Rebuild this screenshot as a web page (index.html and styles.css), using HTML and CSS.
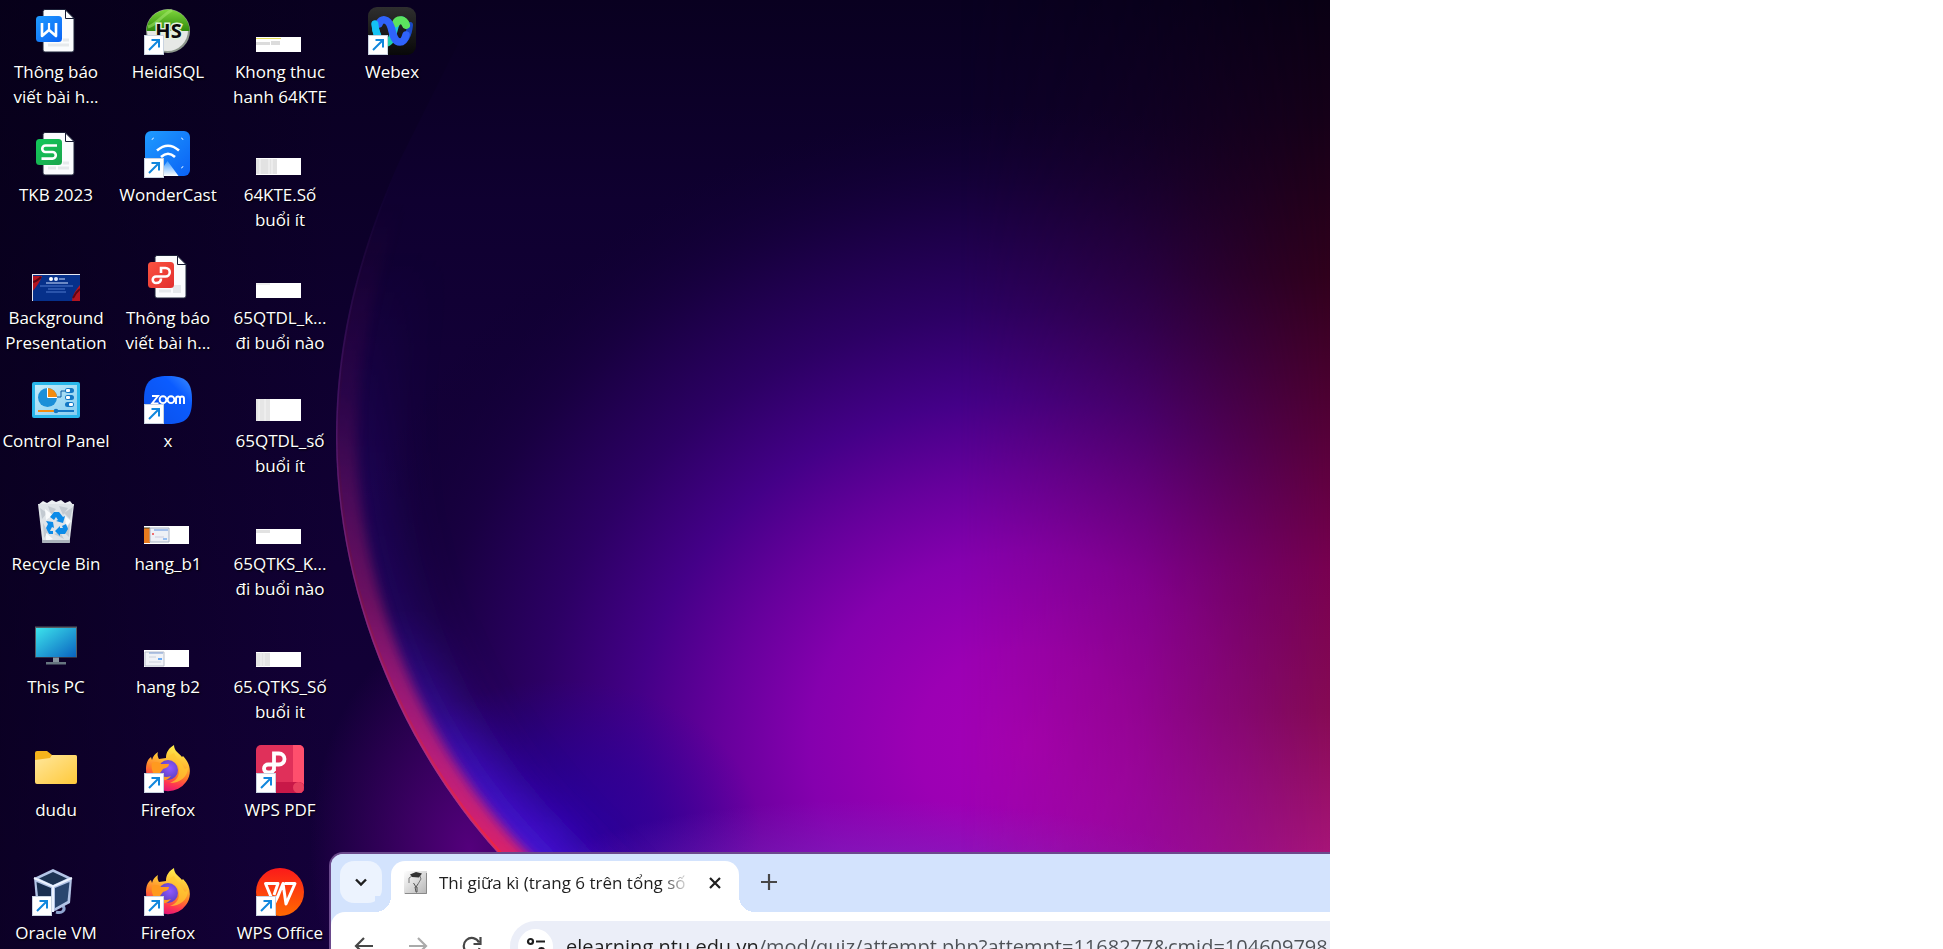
FILE: index.html
```html
<!DOCTYPE html>
<html lang="vi">
<head>
<meta charset="utf-8">
<title>Desktop</title>
<link rel="stylesheet" href="styles.css">
</head>
<body>
<svg class="defs" aria-hidden="true">
  <defs>
    <linearGradient id="gBlue" x1="0" y1="0" x2="1" y2="1"><stop offset="0" stop-color="#1f9bff"/><stop offset="1" stop-color="#0a62f5"/></linearGradient>
    <linearGradient id="gGreen" x1="0" y1="0" x2="1" y2="1"><stop offset="0" stop-color="#12c95a"/><stop offset="1" stop-color="#1ba54d"/></linearGradient>
    <linearGradient id="gRed" x1="0" y1="0" x2="1" y2="1"><stop offset="0" stop-color="#fb5340"/><stop offset="1" stop-color="#e22f2f"/></linearGradient>
    <linearGradient id="gHeidi" x1="0" y1="0" x2="0" y2="1"><stop offset="0" stop-color="#7ed63c"/><stop offset="1" stop-color="#2f8a0c"/></linearGradient>
    <linearGradient id="gScreen" x1="0" y1="0" x2="1" y2="1"><stop offset="0" stop-color="#3ce3ec"/><stop offset="1" stop-color="#0a63c0"/></linearGradient>
    <linearGradient id="gFolder" x1="0" y1="0" x2="1" y2="1"><stop offset="0" stop-color="#ffe79d"/><stop offset="1" stop-color="#ffc93a"/></linearGradient>
    <linearGradient id="gFox" x1=".7" y1="0" x2=".4" y2="1"><stop offset="0" stop-color="#fff44f"/><stop offset=".35" stop-color="#ffbd35"/><stop offset=".6" stop-color="#ff7a2a"/><stop offset=".8" stop-color="#ff3750"/><stop offset="1" stop-color="#e0107c"/></linearGradient>
    <radialGradient id="gGlobe" cx=".6" cy=".4" r=".6"><stop offset="0" stop-color="#9059ff"/><stop offset="1" stop-color="#5b3fc0"/></radialGradient>
    <linearGradient id="gZoom" x1="0" y1="1" x2="1" y2="0"><stop offset="0" stop-color="#0b4fe8"/><stop offset=".7" stop-color="#0b5cff"/><stop offset="1" stop-color="#3d8dff"/></linearGradient>
    <linearGradient id="gWps" x1="0" y1="0" x2="0" y2="1"><stop offset="0" stop-color="#fb1a1a"/><stop offset="1" stop-color="#ff6a00"/></linearGradient>
    <linearGradient id="gPanel" x1="0" y1="0" x2="1" y2="1"><stop offset="0" stop-color="#c4ecfa"/><stop offset="1" stop-color="#86cdf0"/></linearGradient>
    <linearGradient id="gBeam" x1="0" y1="0" x2="0" y2="1"><stop offset="0" stop-color="#3e9cff"/><stop offset="1" stop-color="#fff"/></linearGradient>
    <linearGradient id="gDark" x1="0" y1="0" x2="0" y2="1"><stop offset="0" stop-color="#2f2f2f"/><stop offset="1" stop-color="#080808"/></linearGradient>
    <linearGradient id="gWebexA" x1="0" y1="0" x2="0" y2="1"><stop offset="0" stop-color="#12c4ff"/><stop offset="1" stop-color="#1fd0a8"/></linearGradient>

    <symbol id="shortcut" viewBox="0 0 20 20">
      <rect width="20" height="20" fill="#c9d3e0"/><rect x="1" y="1" width="18" height="18" fill="#fff"/>
      <path d="M5 15 14.500 5.500M7.500 5H15v7.500" fill="none" stroke="#1187dd" stroke-width="2"/>
    </symbol>
    <symbol id="page" viewBox="0 0 48 48">
      <path d="M13 2.500h20l9 9V43a2 2 0 0 1-2 2H13a2 2 0 0 1-2-2v-38.500a2 2 0 0 1 2-2z" fill="#fbfcfe" stroke="#1d2238"/>
      <path d="M33.500 3v8.500H42z" fill="#fff" stroke="#151a33"/>
    </symbol>
    <symbol id="docw" viewBox="0 0 48 48"><use href="#page"/>
      <path d="M16 38h21M31 33h6" stroke="#e6e9ec" stroke-width="3"/>
      <rect x="4" y="9" width="26" height="26" rx="3.500" fill="url(#gBlue)"/>
      <path d="M10 15v13l7-6 7 6V15" transform="translate(0 1)" fill="none" stroke="#fff" stroke-width="2.600" stroke-linejoin="round"/><path d="M17 16v7" stroke="#fff" stroke-width="2.200"/>
    </symbol>
    <symbol id="docs" viewBox="0 0 48 48"><use href="#page"/>
      <path d="M16 38h8m2 0h11M31 33h6" stroke="#e6e9ec" stroke-width="3"/>
      <rect x="4" y="9" width="26" height="26" rx="3.500" fill="url(#gGreen)"/>
      <path d="M25 15.500H13.500a3.200 3.200 0 0 0 0 6.500h7a3.300 3.300 0 0 1 0 6.600H9.500" fill="none" stroke="#fff" stroke-width="2.600"/>
    </symbol>
    <symbol id="docp" viewBox="0 0 48 48"><use href="#page"/>
      <path d="M15 38h12" stroke="#e6e9ec" stroke-width="3"/><path d="M29 32h8v8h-8z" fill="#e6e9ec"/>
      <rect x="4" y="9" width="26" height="26" rx="3.500" fill="url(#gRed)"/>
      <path d="M17 20v-5h4.500a4 4 0 0 1 0 8.500H12a3.200 3.200 0 1 0 0 6.500c3 0 5-1.500 5-4.500" fill="none" stroke="#fff" stroke-width="2.600"/>
    </symbol>
    <symbol id="heidi" viewBox="0 0 48 48">
      <circle cx="24" cy="24" r="22" fill="#8d978c"/><circle cx="23.500" cy="23.500" r="20.500" fill="#e6e8e6"/>
      <path d="M2.500 24a21.500 21.500 0 0 1 43 0z" fill="url(#gHeidi)"/>
      <path d="M4 20c8-2 12-10 24-17" fill="none" stroke="#a8ea70" stroke-opacity=".5" stroke-width="3"/>
      <text x="24.500" y="31" text-anchor="middle" class="heidi-text">HS</text>
    </symbol>
    <symbol id="wonder" viewBox="0 0 48 48">
      <rect x="1" y="1" width="45" height="45" rx="6" fill="url(#gBlue)"/>
      <path d="M13 46 23.500 31 34.500 46z" fill="url(#gBeam)"/>
      <path d="M13 20.500q11-9.500 22 0M17 27q7-6.500 14 0" fill="none" stroke="#fff" stroke-width="2.600"/>
      <path d="M8 10q0-2 2-2M37 8q2 0 2 2M39 36q0 2-2 2" fill="none" stroke="#c5e3ff"/>
    </symbol>
    <symbol id="webex" viewBox="0 0 48 48">
      <rect width="48" height="48" rx="9" fill="url(#gDark)"/>
      <path d="M42 18C41 29 37 35 32 35" fill="none" stroke="#1a48c4" stroke-width="6" stroke-linecap="round"/>
      <path d="M7 17c1 12 5 19 11 19 6 0 7-9 9-16 1-4 3-7 7-7" fill="none" stroke="url(#gWebexA)" stroke-width="7" stroke-linecap="round"/>
      <path d="M28 16c2-4 8-4 10 2" fill="none" stroke="#5be35f" stroke-width="8" stroke-linecap="round"/>
      <path d="M11 17c2-6 9-6 12 3 2 7 3 15 9 15 3 0 5-3 6-7" fill="none" stroke="#2f63fb" stroke-width="7.500" stroke-linecap="round"/>
      <path d="M7 17c0 4 1 8 3 12" fill="none" stroke="#14c2f4" stroke-width="7" stroke-linecap="round"/>
    </symbol>
    <symbol id="control" viewBox="0 0 48 48">
      <rect y="6" width="48" height="36" rx="2" fill="#29b6ea"/><rect x="3" y="9" width="42" height="30" fill="url(#gPanel)"/>
      <circle cx="15.500" cy="21.500" r="9.500" fill="#1b8fd8"/><path d="M15.500 21.500V12a9.500 9.500 0 0 1 9.500 9.500z" fill="#f28c0f"/><path d="M15.500 12v9.500H25" fill="none" stroke="#fff"/>
      <path d="M25 21h4v-6h5" fill="none" stroke="#0c5ba0"/>
      <g fill="#1277c4"><rect x="33" y="12" width="9" height="5" rx="2.500"/><rect x="33" y="19" width="9" height="5" rx="2.500"/><rect x="33" y="26" width="9" height="5" rx="2.500"/></g>
      <g fill="#fff"><rect x="34" y="13" width="4" height="3" rx="1"/><rect x="34" y="20" width="4" height="3" rx="1"/><rect x="37" y="27" width="4" height="3" rx="1"/></g>
      <path d="M6 35h17" stroke="#f28c0f" stroke-width="2"/><path d="M24 35h18" stroke="#1277c4" stroke-width="2"/><circle cx="24" cy="35" r="2.300" fill="#1277c4"/>
    </symbol>
    <symbol id="zoomapp" viewBox="0 0 48 48">
      <path d="M24 0c18 0 24 6 24 24s-6 24-24 24S0 42 0 24 6 0 24 0z" fill="url(#gZoom)"/>
      <g fill="none" stroke="#fff" stroke-width="1.900"><path d="M8 20h6l-6 7.500h6.500"/><circle cx="19" cy="23.700" r="3.400"/><circle cx="27" cy="23.700" r="3.400"/><path d="M32 28v-5.500a2 2 0 0 1 4 0V28m0-5.500a2 2 0 0 1 4 0V28"/></g>
    </symbol>
    <symbol id="bin" viewBox="0 0 48 48">
      <path d="M6 6l5-4 4 2 5-3 4 2 5-2 4 3 5-2 4 5z" fill="#eceff2"/>
      <path d="M6 5h36l-4.500 39h-27z" fill="#dfe4e8"/>
      <path d="M8 9l7 5-5 6zM16 7l8 3-5 6zM27 7l9 2-5 7zM41 8l-3 12-6-6zM11 24l5 9-4 6zM22 35l6-2 4 7zM38 24l-1 14-5-5z" fill="#c3cad1"/>
      <path d="M13 10l8 6-7 5zM33 17l6 5-5 6zM14 34l7 6-7 2z" fill="#f8fafb"/>
      <path d="M10 41h28l-.5 3h-27z" fill="#aab2ba"/>
      <g fill="#0c8be8"><path d="M18 18l4-5h5l4 5 2-1-2 7-7-2 2-1-2-3-2 3z"/><path d="M14 22l7 1 1 6-2-1-2 4h3v3h-4l-3-6 2-4z"/><path d="M34 25l2 5-3 5h-5v2l-5-5 5-5v2h3l-1-2z"/></g>
    </symbol>
    <symbol id="pc" viewBox="0 0 48 48">
      <rect x="3" y="4.500" width="42" height="31" fill="#555c63"/><rect x="4" y="6" width="40" height="29" fill="url(#gScreen)"/>
      <path d="M21 35.500h6V40h-6z" fill="#87949e"/><path d="M14 40h20v2.500H14z" fill="#66757f"/>
    </symbol>
    <symbol id="folder" viewBox="0 0 48 48">
      <path d="M3 8a2 2 0 0 1 2-2h10l5 4h23a2 2 0 0 1 2 2v5H3z" fill="#f5b31c"/><path d="M3 15l15-2 2-3h23a2 2 0 0 1 2 2v25a2 2 0 0 1-2 2H5a2 2 0 0 1-2-2z" fill="url(#gFolder)"/>
    </symbol>
    <symbol id="fox" viewBox="0 0 48 48">
      <path d="M2 24c0-6 2-10 5-12l1 3c1-4 3-6 6-8-1 3 0 5 1 7l7-1c0-6 3-10 8-13 0 6 5 8 8 12l1-1c8 8 9 18 3 26a22 22 0 0 1-36 0C3 33 2 29 2 24z" fill="url(#gFox)"/>
      <circle cx="24" cy="25" r="10" fill="url(#gGlobe)"/>
      <path d="M8 18c4-2 7-1 9 1h8c0 3-3 4-6 5l-3 4c2 4 6 5 11 3-4 6-12 5-16 0-3-4-4-9-3-13z" fill="#ff9a1f"/>
      <path d="M25 12c6 1 9 6 10 12 1 7-3 12-9 14 10 0 18-6 18-16-2 2-3 2-4 1-2-6-8-9-10-15-2 1-4 2-5 4z" fill="#ffc830" fill-opacity=".75"/>
    </symbol>
    <symbol id="wpspdf" viewBox="0 0 48 48">
      <rect width="48" height="48" rx="5" fill="#e0305a"/><path d="M37 0h6a5 5 0 0 1 5 5v38a5 5 0 0 1-11 0z" fill="#ff4f6d"/>
      <path d="M18 37h25a5.500 5.500 0 0 1 0 11H18z" fill="#c81848"/><circle cx="42.500" cy="42.500" r="5.500" fill="#e8405f"/>
      <path d="M18 26V8.500h5a5.500 5.500 0 0 1 0 11H12a4 4 0 1 0 0 8c4 0 6-1 6-5" fill="none" stroke="#fff" stroke-width="3.800"/>
    </symbol>
    <symbol id="wps" viewBox="0 0 48 48">
      <circle cx="24" cy="24" r="24" fill="url(#gWps)"/>
      <path d="M18 27 22 15.500H9.500L18 36l4-8 5-12.500L30 36l9-20.500H28.500" fill="none" stroke="#fff" stroke-width="3" stroke-linejoin="round"/>
    </symbol>
    <symbol id="vbox" viewBox="0 0 48 48">
      <path d="M24 44c6 2 10-2 7-6" fill="none" stroke="#8fa5cf" stroke-width="3"/>
      <path d="M2 10 21 1l19 9-2 25-17 9L4 33z" fill="#b3c4e6"/>
      <path d="M7 10.500 21 4l14 6.500L21 17z" fill="#1e3453"/><path d="M4.500 14 19 20v20L6.500 33z" fill="#1a2f4f"/><path d="M37.500 14 23 20v20l12.500-7z" fill="#2a466f"/>
      <path d="M2 10l19 8.500L40 10M21 18v26" fill="none" stroke="#edf3ff" stroke-width="2"/>
    </symbol>
  </defs>
</svg>

<main class="desktop">
  <svg class="wallpaper" viewBox="0 0 1330 949" preserveAspectRatio="xMidYMid slice" aria-hidden="true">
    <defs>
      <linearGradient id="sky" x1="0" y1="0" x2="0" y2="1"><stop offset="0" stop-color="#090020"/><stop offset=".4" stop-color="#0f0030"/><stop offset="1" stop-color="#15003c"/></linearGradient>
      <linearGradient id="leftDark" x1="0" x2="1" y1="0" y2="0"><stop offset="0" stop-color="#050014" stop-opacity=".55"/><stop offset="1" stop-color="#050014" stop-opacity="0"/></linearGradient>
      <radialGradient id="glow" gradientUnits="userSpaceOnUse" cx="0" cy="0" r="1" gradientTransform="translate(1025 745) scale(720 640)">
        <stop offset="0" stop-color="#a600b6"/><stop offset=".15" stop-color="#9c00b4"/><stop offset=".3" stop-color="#8500ae"/><stop offset=".42" stop-color="#66009c"/><stop offset=".54" stop-color="#440088"/><stop offset=".68" stop-color="#2c0064"/><stop offset=".84" stop-color="#190042"/><stop offset="1" stop-color="#0f0030" stop-opacity="0"/>
      </radialGradient>
      <radialGradient id="blue" gradientUnits="userSpaceOnUse" cx="0" cy="0" r="1" gradientTransform="translate(560 830) scale(200 150)"><stop offset="0" stop-color="#2a00a4" stop-opacity=".9"/><stop offset=".5" stop-color="#2600a0" stop-opacity=".5"/><stop offset="1" stop-color="#2600a0" stop-opacity="0"/></radialGradient>
      <radialGradient id="haze" gradientUnits="userSpaceOnUse" cx="0" cy="0" r="1" gradientTransform="translate(880 890) scale(360 90)"><stop offset="0" stop-color="#8428c4" stop-opacity=".8"/><stop offset="1" stop-color="#8428c4" stop-opacity="0"/></radialGradient>
      <radialGradient id="outer" gradientUnits="userSpaceOnUse" cx="0" cy="0" r="1" gradientTransform="translate(470 850) scale(160 230)"><stop offset="0" stop-color="#54007c"/><stop offset="1" stop-color="#54007c" stop-opacity="0"/></radialGradient>
      <linearGradient id="redV" gradientUnits="userSpaceOnUse" x1="0" y1="0" x2="0" y2="949"><stop offset="0" stop-color="#090014"/><stop offset=".12" stop-color="#150018"/><stop offset=".29" stop-color="#30001c"/><stop offset=".46" stop-color="#560038"/><stop offset=".6" stop-color="#780050"/><stop offset=".75" stop-color="#860a54"/><stop offset=".9" stop-color="#a81478"/></linearGradient>
      <linearGradient id="redH" gradientUnits="userSpaceOnUse" x1="960" y1="0" x2="1330" y2="0"><stop offset="0" stop-color="#fff" stop-opacity="0"/><stop offset=".5" stop-color="#fff" stop-opacity=".36"/><stop offset="1" stop-color="#fff"/></linearGradient>
      <linearGradient id="fade" gradientUnits="userSpaceOnUse" x1="0" y1="200" x2="0" y2="850"><stop offset="0" stop-color="#fff" stop-opacity="0"/><stop offset=".3" stop-color="#fff" stop-opacity=".1"/><stop offset=".6" stop-color="#fff" stop-opacity=".4"/><stop offset="1" stop-color="#fff"/></linearGradient>
      <linearGradient id="fadeBlue" gradientUnits="userSpaceOnUse" x1="0" y1="250" x2="0" y2="850"><stop offset="0" stop-color="#fff" stop-opacity="0"/><stop offset=".6" stop-color="#fff" stop-opacity=".22"/><stop offset="1" stop-color="#fff" stop-opacity=".95"/></linearGradient>
      <linearGradient id="rim" gradientUnits="userSpaceOnUse" x1="0" y1="180" x2="0" y2="560"><stop offset="0" stop-color="#6a3cb0" stop-opacity="0"/><stop offset="1" stop-color="#8a3cb0" stop-opacity=".4"/></linearGradient>
      <mask id="redMask"><rect width="1330" height="949" fill="url(#redH)"/></mask>
      <mask id="fadeMask" maskUnits="userSpaceOnUse" x="0" y="0" width="1330" height="949"><rect width="1330" height="949" fill="url(#fade)"/></mask>
      <mask id="blueMask" maskUnits="userSpaceOnUse" x="0" y="0" width="1330" height="949"><rect width="1330" height="949" fill="url(#fadeBlue)"/></mask>
      <clipPath id="disc"><path d="M400 160C350 270 336 360 336 436 336 590 400 745 497 852L590 949H1330V0H480z"/></clipPath>
      <filter id="soft" filterUnits="userSpaceOnUse" x="100" y="0" width="900" height="1100"><feGaussianBlur stdDeviation="24"/></filter>
      <filter id="edge" filterUnits="userSpaceOnUse" x="100" y="0" width="900" height="1100"><feGaussianBlur stdDeviation="6"/></filter>
    </defs>
    <rect width="1330" height="949" fill="url(#sky)"/>
    <rect width="340" height="949" fill="url(#leftDark)"/>
    <rect width="1330" height="949" fill="url(#outer)"/>
    <g clip-path="url(#disc)">
      <rect y="500" width="1330" height="449" fill="#15003c"/>
      <rect width="1330" height="501" fill="url(#sky)"/>
      <rect width="1330" height="949" fill="url(#glow)"/>
      <rect width="1330" height="949" fill="url(#blue)"/>
      <rect width="1330" height="949" fill="url(#haze)"/>
      <g fill="none" mask="url(#blueMask)">
        <path d="M400 160C350 270 336 360 336 436 336 590 400 745 497 852L590 949" stroke="#4a12dc" stroke-width="110" filter="url(#soft)"/>
      </g>
      <g fill="none" mask="url(#fadeMask)">
        <path d="M400 160C350 270 336 360 336 436 336 590 400 745 497 852L590 949" stroke="#d8206a" stroke-width="42" filter="url(#edge)"/>
        <path d="M400 160C350 270 336 360 336 436 336 590 400 745 497 852L590 949" stroke="#f02444" stroke-width="7"/>
      </g>
      <path d="M400 160C350 270 336 360 336 436 336 590 400 745 497 852" fill="none" stroke="url(#rim)" stroke-width="3"/>
    </g>
    <rect width="1330" height="949" fill="url(#redV)" mask="url(#redMask)"/>
  </svg>

  <div class="icons">
    <button class="item"><svg class="icon"><use href="#docw"/></svg><span class="label">Thông báo<br>viết bài h...</span></button>
    <button class="item"><svg class="icon"><use href="#docs"/></svg><span class="label">TKB 2023</span></button>
    <button class="item"><span class="icon"><span class="photo"><svg viewBox="0 0 48 27"><rect width="48" height="27" fill="#06308a"/><path d="M0 2h10C8 8 5 12 0 18zM48 11c-3 4-7 8-8 16h8z" fill="#b31420"/><path d="M0 8c4 0 6-2 9-5M41 24c2-4 3-6 7-9" stroke="#5c0614" fill="none" stroke-width="2"/><circle cx="19" cy="5" r="2" fill="#fff"/><circle cx="24" cy="5" r="2" fill="#dce8ff"/><path d="M27 5h6M14 9h22" stroke="#cfe0ff"/><path d="M8 12h33M16 15h17M14 18h20" stroke="#4f78cc"/><path d="M0 .5h48M.5 0v27" stroke="#e8e8f0"/></svg></span></span><span class="label">Background<br>Presentation</span></button>
    <button class="item"><svg class="icon"><use href="#control"/></svg><span class="label">Control Panel</span></button>
    <button class="item"><svg class="icon"><use href="#bin"/></svg><span class="label">Recycle Bin</span></button>
    <button class="item"><svg class="icon"><use href="#pc"/></svg><span class="label">This PC</span></button>
    <button class="item"><svg class="icon"><use href="#folder"/></svg><span class="label">dudu</span></button>
    <button class="item"><span class="icon"><svg class="icon"><use href="#vbox"/></svg><svg class="link"><use href="#shortcut"/></svg></span><span class="label">Oracle VM</span></button>

    <button class="item"><span class="icon"><svg class="icon"><use href="#heidi"/></svg><svg class="link"><use href="#shortcut"/></svg></span><span class="label">HeidiSQL</span></button>
    <button class="item"><span class="icon"><svg class="icon"><use href="#wonder"/></svg><svg class="link"><use href="#shortcut"/></svg></span><span class="label">WonderCast</span></button>
    <button class="item"><svg class="icon"><use href="#docp"/></svg><span class="label">Thông báo<br>viết bài h...</span></button>
    <button class="item"><span class="icon"><svg class="icon"><use href="#zoomapp"/></svg><svg class="link"><use href="#shortcut"/></svg></span><span class="label">x</span></button>
    <button class="item"><span class="icon"><span class="thumb h18"><svg viewBox="0 0 45 18"><path d="M0 2h6v15H0z" fill="#e87a1e"/><path d="M0 2h6" stroke="#442"/><path d="M6 2h19v14H6z" fill="#eef1f6" stroke="#a9b3c4"/><path d="M10 4h14" stroke="#5d8fe0"/><path d="M11 11h9" stroke="#ccd"/><path d="M19 13h4" stroke="#3f8df0"/><circle cx="9" cy="8" r="1" fill="#e44"/></svg></span></span><span class="label">hang_b1</span></button>
    <button class="item"><span class="icon"><span class="thumb h17"><svg viewBox="0 0 45 17"><path d="M1 2h19v14H1z" fill="#f1f3f7" stroke="#b9bfca"/><path d="M5 3h14" stroke="#7b9bd4"/><path d="M5 7h7M5 12h12" stroke="#cdd2dc"/><path d="M14 9h4" stroke="#69a9f4" stroke-width="2"/></svg></span></span><span class="label">hang b2</span></button>
    <button class="item"><span class="icon"><svg class="icon"><use href="#fox"/></svg><svg class="link"><use href="#shortcut"/></svg></span><span class="label">Firefox</span></button>
    <button class="item"><span class="icon"><svg class="icon"><use href="#fox"/></svg><svg class="link"><use href="#shortcut"/></svg></span><span class="label">Firefox</span></button>

    <button class="item"><span class="icon"><span class="thumb h15"><svg viewBox="0 0 45 15"><path d="M0 1.500h25" stroke="#e6df5a"/><path d="M0 5h14v3H0zM15 4h9v4h-9z" fill="#dcdcdc"/></svg></span></span><span class="label">Khong thuc<br>hanh 64KTE</span></button>
    <button class="item"><span class="icon"><span class="thumb h17"><svg viewBox="0 0 45 17"><path d="M0 1h21v15H0z" fill="#e2e2e2"/><path d="M4 1v15M13 1v15M16 1v15" stroke="#f6f6f6"/></svg></span></span><span class="label">64KTE.Số<br>buổi ít</span></button>
    <button class="item"><span class="icon"><span class="thumb h15"><svg viewBox="0 0 45 15"><path d="M0 1h14" stroke="#ddd"/></svg></span></span><span class="label">65QTDL_k...<br>đi buổi nào</span></button>
    <button class="item"><span class="icon"><span class="thumb h22"><svg viewBox="0 0 45 22"><path d="M0 0h14v22H0z" fill="#e6e6e6"/><path d="M3 0v22M9 0v22" stroke="#f5f5f5"/></svg></span></span><span class="label">65QTDL_số<br>buổi ít</span></button>
    <button class="item"><span class="icon"><span class="thumb h15"><svg viewBox="0 0 45 15"><path d="M0 1h14v3H0z" fill="#e2e2e2"/></svg></span></span><span class="label">65QTKS_K...<br>đi buổi nào</span></button>
    <button class="item"><span class="icon"><span class="thumb h15"><svg viewBox="0 0 45 15"><path d="M0 1h14v13H0z" fill="#e4e4e4"/><path d="M5 0v15M8 0v15" stroke="#f4f4f4"/></svg></span></span><span class="label">65.QTKS_Số<br>buổi it</span></button>
    <button class="item"><span class="icon"><svg class="icon"><use href="#wpspdf"/></svg><svg class="link"><use href="#shortcut"/></svg></span><span class="label">WPS PDF</span></button>
    <button class="item"><span class="icon"><svg class="icon"><use href="#wps"/></svg><svg class="link"><use href="#shortcut"/></svg></span><span class="label">WPS Office</span></button>

    <button class="item"><span class="icon"><svg class="icon"><use href="#webex"/></svg><svg class="link"><use href="#shortcut"/></svg></span><span class="label">Webex</span></button>
  </div>

  <section class="browser" aria-label="Browser">
    <div class="tabs">
      <button class="tab-search" aria-label="Search tabs"><svg viewBox="0 0 14 14"><path d="M2 4.500 7 9.500l5-5" fill="none" stroke="#1f1f1f" stroke-width="2.400"/></svg></button>
      <div class="tab">
        <svg class="favicon" viewBox="0 0 23 23"><defs><linearGradient id="fav" x1="0" y1="0" x2="1" y2="1"><stop offset="0" stop-color="#fff"/><stop offset="1" stop-color="#b5b5b5"/></linearGradient></defs><rect width="23" height="23" fill="url(#fav)"/><path d="M22.500 2v20.500H1" fill="none" stroke="#8a8a8a"/><path d="M6 3.500 12 1l6 1.500-3 4-7-.5z" fill="#333"/><path d="M8 5 5 7v5M16 5l1 3-3 5" fill="none" stroke="#777"/><path d="M9.500 12l2.500 4 2-3M11 16h2v5h-1z" fill="none" stroke="#555"/></svg>
        <span class="title">Thi giữa kì (trang 6 trên tổng số</span>
        <button class="close" aria-label="Close tab"><svg viewBox="0 0 14 14"><path d="M2 2l10 10M12 2 2 12" stroke="#1f1f1f" stroke-width="2.200"/></svg></button>
      </div>
      <button class="new-tab" aria-label="New tab"><svg viewBox="0 0 16 16"><path d="M8 0v16M0 8h16" stroke="#474747" stroke-width="2.200"/></svg></button>
    </div>
    <div class="toolbar">
      <button class="nav" aria-label="Back"><svg viewBox="0 0 20 20"><path d="M19 10H2M10 2l-8 8 8 8" fill="none" stroke="#474747" stroke-width="2.200"/></svg></button>
      <button class="nav" aria-label="Forward" disabled><svg viewBox="0 0 20 20"><path d="M1 10h17M10 2l8 8-8 8" fill="none" stroke="#aaa" stroke-width="2.200"/></svg></button>
      <button class="nav" aria-label="Reload"><svg viewBox="0 0 20 20"><path d="M17.500 12A8 8 0 1 1 17 6.500M18.500 1v7h-7" fill="none" stroke="#474747" stroke-width="2.200"/></svg></button>
      <div class="omnibox">
        <button class="site" aria-label="Site information"><svg viewBox="0 0 20 20"><g fill="none" stroke="#1f1f1f" stroke-width="2.200"><circle cx="4.500" cy="5.500" r="2.500"/><path d="M10 5.500h9M1 14.500h9"/><circle cx="15.500" cy="14.500" r="2.500"/></g></svg></button>
        <input class="url" type="text" aria-label="Address" value="elearning.ntu.edu.vn/mod/quiz/attempt.php?attempt=1168277&amp;cmid=104609798">
      </div>
    </div>
  </section>
</main>
</body>
</html>
```
FILE: styles.css
```css
* { box-sizing: border-box; }

body {
  margin: 0;
  background: #fff;
  font-family: "Open Sans", "Noto Sans", sans-serif;
  overflow: hidden;
}

button {
  border: 0;
  padding: 0;
  background: none;
  color: inherit;
  font: inherit;
}

svg { display: block; }

.defs {
  position: absolute;
  width: 0;
  height: 0;
}

.heidi-text {
  font: bold 20px "Open Sans", sans-serif;
  fill: #0b0b0b;
  stroke: #e4f2dc;
  stroke-width: 3px;
  paint-order: stroke;
}

.desktop {
  position: relative;
  width: 68.45vw;
  height: 100vh;
  overflow: hidden;
  background: #0a0022;
}

.wallpaper {
  position: absolute;
  inset: 0;
  width: 100%;
  height: 100%;
}

.icons {
  position: relative;
  display: grid;
  grid-template-rows: repeat(8, 123px);
  grid-auto-flow: column;
  grid-auto-columns: 112px;
  justify-content: start;
}

.item {
  display: flex;
  flex-direction: column;
  align-items: center;
  gap: 4px;
  padding-top: 7px;
}

.icon {
  position: relative;
  flex: none;
  display: block;
  width: 48px;
  height: 48px;
}

.link {
  position: absolute;
  left: 0;
  bottom: 0;
  width: 20px;
  height: 20px;
}

.photo {
  display: flex;
  height: 100%;
  align-items: flex-end;
}

.photo svg { width: 48px; height: 27px; }

.thumb {
  display: block;
  width: 45px;
  background: #fff;
}

.icon:has(.thumb) {
  display: flex;
  align-items: flex-end;
  padding-bottom: 3px;
}

.h15 { height: 15px; }
.h17 { height: 17px; }
.h18 { height: 18px; }
.h22 { height: 22px; }

.label {
  color: #fff;
  font-size: 17px;
  line-height: 25px;
  text-align: center;
  white-space: nowrap;
  text-shadow: 1px 1px 2px #000;
}

.browser {
  position: absolute;
  left: 329px;
  right: 0;
  top: 852px;
  border: 2px solid #6a4a8c;
  border-width: 2px 0 0 2px;
  border-radius: 14px 0 0 0;
  background: #d3e3fd;
  overflow: hidden;
}

.tabs {
  display: flex;
  height: 58px;
  padding: 7px 9px 0;
  background: #d3e3fd;
}

.tab-search {
  display: grid;
  place-items: center;
  width: 42px;
  height: 42px;
  margin-right: 9px;
  border-radius: 14px;
  background: #ecf3fe;
}

.tab-search svg,
.close svg { width: 14px; height: 14px; }

.tab {
  position: relative;
  display: flex;
  align-items: center;
  width: 348px;
  padding: 0 16px 8px 13px;
  border-radius: 14px 14px 0 0;
  background: #fff;
}

.tab::before,
.tab::after {
  content: "";
  position: absolute;
  bottom: 0;
  width: 16px;
  height: 16px;
}

.tab::before {
  right: 100%;
  background: radial-gradient(circle at 0 0, #d3e3fd 16px, #fff 16px);
}

.tab::after {
  left: 100%;
  background: radial-gradient(circle at 100% 0, #d3e3fd 16px, #fff 16px);
}

.favicon {
  flex: none;
  width: 23px;
  height: 23px;
  margin-right: 12px;
}

.title {
  flex: 1;
  overflow: hidden;
  color: #1f1f1f;
  font-size: 17px;
  line-height: 26px;
  white-space: nowrap;
  -webkit-mask-image: linear-gradient(90deg, #000 88%, transparent);
  mask-image: linear-gradient(90deg, #000 88%, transparent);
}

.close {
  display: grid;
  place-items: center;
  width: 16px;
  height: 24px;
  margin-left: 16px;
}

.new-tab {
  display: grid;
  place-items: center;
  width: 28px;
  height: 42px;
  margin-left: 16px;
}

.new-tab svg { width: 16px; height: 16px; }

.toolbar {
  display: flex;
  align-items: center;
  gap: 34px;
  height: 68px;
  padding-left: 23px;
  border-radius: 14px 0 0 0;
  background: #fff;
}

.nav svg { width: 20px; height: 20px; }

.omnibox {
  flex: 1;
  display: flex;
  align-items: center;
  gap: 13px;
  height: 51px;
  margin-left: -6px;
  padding-left: 8px;
  border-radius: 26px 0 0 26px;
  background: #ebeef8;
}

.site {
  flex: none;
  display: grid;
  place-items: center;
  width: 35px;
  height: 35px;
  border-radius: 50%;
  background: #fff;
}

.site svg { width: 20px; height: 20px; }

.url {
  flex: 1;
  min-width: 0;
  height: 35px;
  padding: 0;
  border: 0;
  outline: 0;
  font: 20px "Open Sans", "Noto Sans", sans-serif;
  color: transparent;
  background: linear-gradient(90deg, #1f1f1f 191px, #4d5156 191px);
  -webkit-background-clip: text;
  background-clip: text;
}
```
